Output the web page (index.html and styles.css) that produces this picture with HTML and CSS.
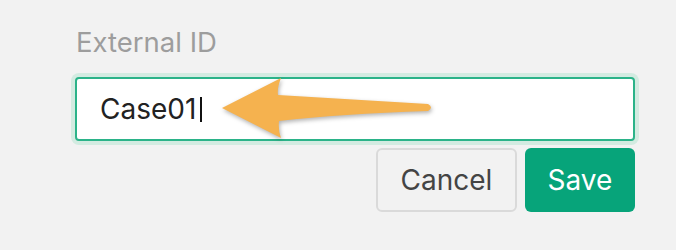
FILE: index.html
```html
<!DOCTYPE html>
<html>
<head>
<meta charset="utf-8">
<link rel="stylesheet" href="styles.css">
</head>
<body>
<div class="form">
  <div class="label">External ID</div>
  <div class="field"><span class="value">Case01</span><span class="caret"></span></div>
  <div class="actions">
    <button class="btn btn-cancel">Cancel</button>
    <button class="btn btn-save">Save</button>
  </div>
  <svg class="arrow" width="240" height="80" viewBox="210 70 240 80">
    <path d="M222,108 L281,78 Q277,88 278,95 L428,104 Q434,107.5 428,111 Q340,114 279,121 Q278,130 281,138 Z" fill="#f5b24f"/>
  </svg>
</div>
</body>
</html>
```

FILE: styles.css
```css
html, body {
  margin: 0;
  padding: 0;
  background: #f2f2f2;
  width: 676px;
  height: 250px;
  overflow: hidden;
}
.form {
  position: relative;
  padding: 25px 0 0 75px;
  width: 560px;
  font-family: Inter, "Open Sans", sans-serif;
}
.label {
  font-size: 27.5px;
  color: #9d9d9d;
  line-height: 34px;
  margin-left: 1px;
  margin-bottom: 18px;
}
.field {
  box-sizing: border-box;
  height: 64px;
  width: 560px;
  border: 2px solid #2bb389;
  border-radius: 4px;
  background: #fff;
  box-shadow: 0 0 0 4px #d3ebe1;
  display: flex;
  align-items: center;
  padding-left: 23px;
  font-size: 28px;
  color: #222;
}
.caret {
  display: inline-block;
  width: 2px;
  height: 25px;
  background: #111;
  margin-left: 4px;
}
.actions {
  display: flex;
  justify-content: flex-end;
  gap: 8px;
  margin-top: 7px;
}
.btn {
  box-sizing: border-box;
  height: 64px;
  border-radius: 6px;
  font-family: inherit;
  font-size: 28px;
  padding: 0;
  cursor: pointer;
}
.btn-cancel {
  width: 141px;
  background: #f2f2f2;
  border: 2px solid #dadada;
  color: #444;
}
.btn-save {
  width: 110px;
  background: #07a47a;
  border: none;
  color: #fff;
}
.arrow {
  position: absolute;
  left: 210px;
  top: 70px;
  filter: drop-shadow(1px 2px 2px rgba(0,0,0,0.3));
}
```
